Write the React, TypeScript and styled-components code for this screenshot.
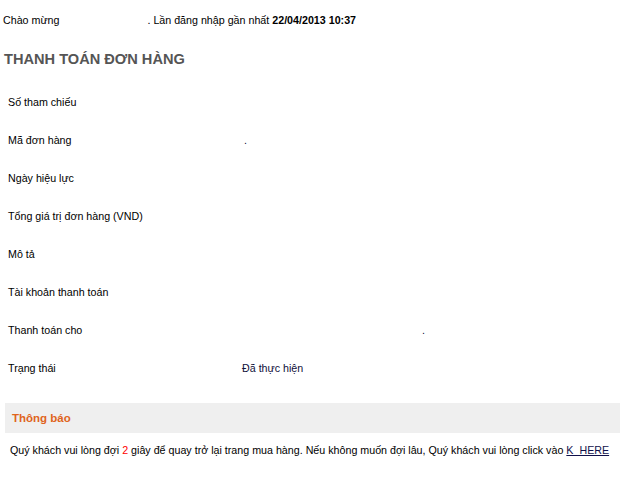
import styled, { createGlobalStyle } from "styled-components";

const GlobalStyle = createGlobalStyle`
  body {
    margin: 0;
    background: #ffffff;
    font-family: Tahoma, "Liberation Sans", Arial, sans-serif;
    font-size: 10.7px;
    color: #000000;
  }
`;

type Row = {
  label: string;
  value?: string;
  gap?: number;
};

const rows: Row[] = [
  { label: "Số tham chiếu" },
  { label: "Mã đơn hàng", value: ".", gap: 2 },
  { label: "Ngày hiệu lực" },
  { label: "Tổng giá trị đơn hàng (VND)" },
  { label: "Mô tả" },
  { label: "Tài khoản thanh toán" },
  { label: "Thanh toán cho", value: ".", gap: 180 },
  { label: "Trạng thái", value: "Đã thực hiện" },
];

export default function App() {
  return (
    <>
      <GlobalStyle />
      <Page>
        <Welcome>
          Chào mừng <Masked $w={85} />. Lần đăng nhập gần nhất{" "}
          <b>22/04/2013 10:37</b>
        </Welcome>

        <Title>THANH TOÁN ĐƠN HÀNG</Title>

        <DetailTable>
          <tbody>
            {rows.map((r) => (
              <tr key={r.label}>
                <Label>{r.label}</Label>
                <Value>
                  {r.gap ? <Masked $w={r.gap} /> : null}
                  {r.value}
                </Value>
              </tr>
            ))}
          </tbody>
        </DetailTable>

        <Notice>
          <NoticeTitle>Thông báo</NoticeTitle>
        </Notice>
        <Message>
          Quý khách vui lòng đợi <Count>2</Count> giây để quay trở lại trang mua
          hàng. Nếu không muốn đợi lâu, Quý khách vui lòng click vào{" "}
          <Link href="#">K_HERE</Link>
        </Message>
      </Page>
    </>
  );
}

const Page = styled.div`
  width: 620px;
  padding-top: 13px;
`;

const Welcome = styled.div`
  padding-left: 3px;
  line-height: 14px;
  white-space: nowrap;

  b {
    font-weight: bold;
  }
`;

const Masked = styled.span<{ $w: number }>`
  display: inline-block;
  width: ${(p) => p.$w}px;
`;

const Title = styled.h1`
  margin: 23px 0 0 4px;
  font-size: 14.6px;
  line-height: 18px;
  font-weight: bold;
  color: #555555;
  font-family: Arial, "Liberation Sans", sans-serif;
`;

const DetailTable = styled.table`
  margin-top: 15px;
  border-collapse: collapse;
  width: 100%;
`;

const Label = styled.td`
  width: 234px;
  height: 38px;
  padding: 0 0 0 8px;
  vertical-align: middle;
  white-space: nowrap;
`;

const Value = styled.td`
  height: 38px;
  padding: 0;
  vertical-align: middle;
  color: #10103a;
  white-space: nowrap;
`;

const Notice = styled.div`
  margin: 16px 0 0 5px;
  height: 30px;
  background: #efefef;
  display: flex;
  align-items: center;
  padding-left: 7px;
`;

const NoticeTitle = styled.span`
  font-weight: bold;
  font-size: 11.5px;
  color: #e0641c;
`;

const Message = styled.p`
  margin: 10px 0 0 10px;
  line-height: 14px;
  white-space: nowrap;
`;

const Count = styled.span`
  color: #ff0000;
`;

const Link = styled.a`
  color: #10104a;
  text-decoration: underline;
`;
